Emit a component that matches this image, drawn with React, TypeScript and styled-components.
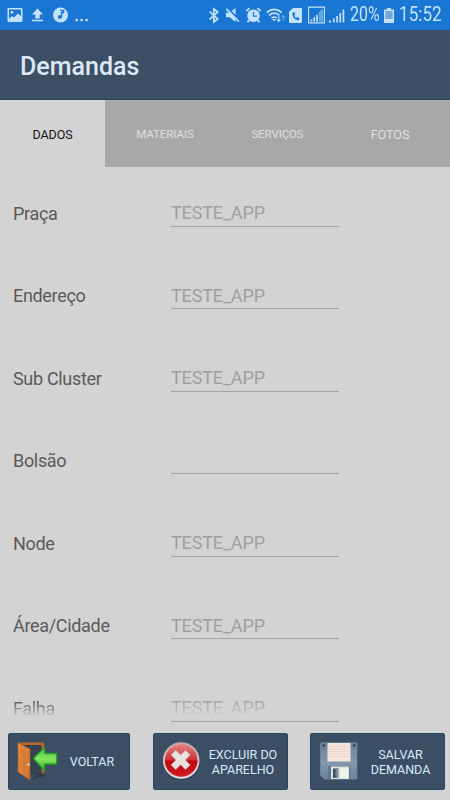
import React from "react";
import styled, { createGlobalStyle, css } from "styled-components";

const GlobalStyle = createGlobalStyle`
  * { box-sizing: border-box; }
  body { margin: 0; background: #d3d3d3; font-family: Roboto, "Liberation Sans", sans-serif; }
`;

const Screen = styled.div`
  width: 450px;
  height: 800px;
  display: flex;
  flex-direction: column;
  overflow: hidden;
  background: #d3d3d3;
`;

const StatusBar = styled.div`
  height: 30px;
  flex: none;
  display: flex;
  align-items: center;
  background: #1976d3;
  color: #c3e2fb;
`;

const Icon = styled.svg<{ $gap: number }>`
  flex: none;
  display: block;
  margin-left: ${(p) => p.$gap}px;
  overflow: visible;
`;

const StatusText = styled.span<{ $gap: number; $width: number; $squeeze: number }>`
  flex: none;
  width: ${(p) => p.$width}px;
  margin-left: ${(p) => p.$gap}px;
  transform: scaleX(${(p) => p.$squeeze});
  transform-origin: left center;
  font-size: 19.5px;
  line-height: 30px;
  white-space: nowrap;
`;

const Header = styled.header`
  height: 70px;
  flex: none;
  display: flex;
  align-items: center;
  padding: 4px 0 0 20px;
  background: #3c4f65;
  border-bottom: 1px solid #24415b;
`;

const Title = styled.h1`
  margin: 0;
  font-size: 25px;
  font-weight: 500;
  letter-spacing: 0;
  color: #dde7f6;
`;

const Tabs = styled.nav`
  height: 67px;
  flex: none;
  display: grid;
  grid-template-columns: 105px 120px 105px 120px;
  background: #a8a8a8;
`;

const Tab = styled.div<{ $active?: boolean; $size: number }>`
  display: flex;
  align-items: center;
  justify-content: center;
  padding-top: 1px;
  font-size: ${(p) => p.$size}px;
  letter-spacing: -0.1px;
  color: ${(p) => (p.$active ? "#151515" : "#dedfe1")};
  background: ${(p) => (p.$active ? "#d3d3d3" : "transparent")};
`;

const Form = styled.main`
  flex: 1;
  min-height: 0;
  overflow: hidden;
  padding-top: 5px;
`;

const Row = styled.div`
  height: 82.5px;
  display: grid;
  grid-template-columns: 157px 169px;
  align-items: center;
  padding-left: 13px;
`;

const fade = css`
  mask-image: linear-gradient(to bottom, #000 20%, transparent 84%);
`;

const Label = styled.label<{ $faded: boolean }>`
  font-size: 18px;
  line-height: 24px;
  letter-spacing: -0.32px;
  padding-top: 1px;
  color: #5a5a5a;
  ${(p) => p.$faded && fade}
`;

const Field = styled.div`
  height: 27px;
  border-bottom: 1px solid #a4a4a4;
  margin-left: 1px;
`;

const Value = styled.div<{ $faded: boolean }>`
  font-size: 18px;
  line-height: 24px;
  letter-spacing: -0.15px;
  padding-top: 1.5px;
  color: #a0a0a0;
  ${(p) => p.$faded && fade}
`;

const Footer = styled.footer`
  height: 78px;
  flex: none;
  display: grid;
  grid-template-columns: 122px 135px 135px;
  gap: 22.5px;
  padding: 11px 0 10px 8px;
`;

const Action = styled.button`
  height: 57px;
  display: flex;
  align-items: center;
  padding: 0;
  border: 1px solid #2a4762;
  border-radius: 2px;
  background: #3c4e64;
  color: #d8e9fa;
  font-family: inherit;
`;

const ActionText = styled.span`
  flex: 1;
  padding-right: 4px;
  font-size: 12.5px;
  line-height: 15px;
  text-align: center;
  white-space: pre;
`;

const tabs = [
  { name: "DADOS", size: 12.5 },
  { name: "MATERIAIS", size: 11.6 },
  { name: "SERVIÇOS", size: 11.5 },
  { name: "FOTOS", size: 12.7 },
];

const rows = [
  ["Praça", "TESTE_APP"],
  ["Endereço", "TESTE_APP"],
  ["Sub Cluster", "TESTE_APP"],
  ["Bolsão", ""],
  ["Node", "TESTE_APP"],
  ["Área/Cidade", "TESTE_APP"],
  ["Falha", "TESTE_APP"],
];

const StatusIcons = () => (
  <StatusBar>
    <Icon $gap={7} width="16" height="14" viewBox="0 0 16 14" fill="currentColor">
      <path fillRule="evenodd" d="M1.5 0h13q1 0 1 1v12q0 1-1 1h-13q-1 0-1-1V1q0-1 1-1ZM2 1.5V11l3-3 2 1.5 4-4 3 2.5V1.5Z" />
      <circle cx="5" cy="4.3" r="1.4" />
    </Icon>
    <Icon $gap={9} width="11" height="15" viewBox="0 0 11 15" fill="currentColor">
      <path d="M5.5.5 11 6.5H7.7v4H3.3v-4H0ZM0 11.8h11v1.4H0Z" />
    </Icon>
    <Icon $gap={10} width="15" height="15" viewBox="0 0 15 15">
      <circle cx="7.5" cy="7" r="7.5" fill="currentColor" />
      <path d="M7.3 2.5h3.2v2H8.6V9" fill="none" stroke="#1976d3" strokeWidth="1.4" />
      <circle cx="6.8" cy="9.1" r="2" fill="#1976d3" />
    </Icon>
    <Icon $gap={7} width="14" height="14" viewBox="0 0 14 14" fill="currentColor">
      <path d="M.5 11h2.3v2.3H.5ZM5.5 11h2.3v2.3H5.5ZM10.5 11h2.3v2.3h-2.3Z" />
    </Icon>
    <Icon $gap={119.5} width="10" height="15" viewBox="0 0 10 15" fill="none" stroke="currentColor" strokeWidth="1.7">
      <path d="m.7 3.7 8 7.2L4.9 14V1l3.8 3.1-8 7.2" />
    </Icon>
    <Icon $gap={7} width="14" height="14" viewBox="0 0 14 14">
      <path d="M0 4.7h3.7L9.5 0v14l-5.8-4.7H0Z" fill="currentColor" />
      <path d="m1 .2 12.5 12.5" stroke="#1976d3" strokeWidth="2.4" />
      <path d="m.3.9 12.7 12.8" stroke="currentColor" strokeWidth="1.6" />
    </Icon>
    <Icon $gap={6} width="15" height="15" viewBox="0 0 15 15">
      <path d="M3.5.2.4 3M11.5.2 14.6 3M3 12.3l-1.5 2M12 12.3l1.5 2" stroke="currentColor" strokeWidth="1.8" />
      <circle cx="7.5" cy="7.7" r="6.3" fill="currentColor" />
      <path d="M7.5 3.8v4.3h3.3" fill="none" stroke="#1976d3" strokeWidth="1.2" />
    </Icon>
    <Icon $gap={5} width="20" height="15" viewBox="0 0 20 15" fill="none" stroke="currentColor">
      <path d="M.7 4.5Q8.2-1.8 15.7 4.5M3.1 7.3q5.1-4.2 10.2 0M5.5 10q2.7-2 5.3 0" strokeWidth="1.7" />
      <path d="m6.2 11 2 2.4 2-2.4Z" fill="currentColor" stroke="none" />
      <path d="M12.8 8.3v5m-1.6-1.6 1.6 1.8 1.6-1.8" strokeWidth="1.1" />
      <path d="M17.3 12.8v-5m-1.6 1.6 1.6-1.8 1.6 1.8" strokeWidth="1.1" opacity=".45" />
    </Icon>
    <Icon $gap={3} width="13" height="15" viewBox="0 0 13 15">
      <path d="M4 0h8q1 0 1 1v13q0 1-1 1H1q-1 0-1-1V4Z" fill="currentColor" />
      <path d="M3.4 5q-.3 6.2 6.1 7.4l1-1.9-2.1-1.4-1.2.8Q5.5 9 5.3 7.3l1-.9-1-2.4Z" fill="#1976d3" />
    </Icon>
    <Icon $gap={6.5} width="17" height="17" viewBox="0 0 17 17" fill="currentColor">
      <path d="M.6.1h15.8v15.8H.6Z" fill="none" stroke="currentColor" strokeWidth="1.1" />
      <path d="M2.5 12.5h1.8v2H2.5ZM5.3 10.3h1.8v4.2H5.3ZM8.1 7.8h1.8v6.7H8.1Z" />
      <path d="M10.8 5h1.8v9.500h-1.8ZM12.600 2.500h2.600v12h-2.600Z" opacity=".45" />
    </Icon>
    <Icon $gap={4} width="16" height="17" viewBox="0 0 16 17" fill="currentColor">
      <path d="M0 13.500h2.200v2H0ZM4 11.500h1.700v4H4ZM7.200 9h1.700v6.500H7.200ZM10.400 6h1.700v9.500h-1.700ZM13.600 2.500h1.700v13h-1.700Z" />
    </Icon>
    <StatusText $gap={5} $width={31} $squeeze={0.82}>20%</StatusText>
    <Icon $gap={3} width="10" height="15" viewBox="0 0 10 15">
      <path d="M3 0h4v1.4h3V15H0V1.4h3Z" fill="currentColor" />
      <path d="M1.4 3h7.2v8H1.4Z" fill="#75a6d8" />
    </Icon>
    <StatusText $gap={4.5} $width={45} $squeeze={0.88}>15:52</StatusText>
  </StatusBar>
);

const DoorIcon = () => (
  <Icon $gap={7} width="43" height="43" viewBox="0 0 43 43">
    <defs>
      <linearGradient id="wood" x2="1" y2="1">
        <stop stopColor="#ec9447" />
        <stop offset="1" stopColor="#c8702c" />
      </linearGradient>
      <linearGradient id="arrow" y2="1" x2="0">
        <stop stopColor="#4fbd3c" />
        <stop offset=".5" stopColor="#82e85f" />
        <stop offset="1" stopColor="#3aa72f" />
      </linearGradient>
    </defs>
    <path d="M2 2.5h26V34H15L2 30Z" fill="#b9682b" />
    <path d="M5 5h20.5v30H14Z" fill="#34414f" />
    <path d="m14 40 12-3 4-2-5-3Z" fill="#293642" opacity=".65" />
    <path d="m2 3 12 6v31L2 32Z" fill="url(#wood)" stroke="#b35e25" strokeWidth=".7" />
    <path d="m4.5 7 3 2v8l-3-2ZM8.8 9.5l3 1.8v8l-3-2ZM4.5 19l3 2v10l-3-2ZM8.8 21.5l3 1.8v10l-3-2Z" fill="#df8237" stroke="#c47031" strokeWidth=".5" />
    <circle cx="12.5" cy="24.5" r="1.2" fill="#d9d7cc" />
    <path d="m17.5 18.5 11-11v6h12V24h-12v6.5Z" fill="url(#arrow)" stroke="#27a325" strokeWidth="1.3" strokeLinejoin="round" />
  </Icon>
);

const DeleteIcon = () => (
  <Icon $gap={8} width="42" height="42" viewBox="0 0 42 42">
    <defs>
      <linearGradient id="red" x2="0" y2="1">
        <stop stopColor="#e58a87" />
        <stop offset=".48" stopColor="#cc3035" />
        <stop offset=".52" stopColor="#bd090e" />
        <stop offset="1" stopColor="#d41b20" />
      </linearGradient>
      <linearGradient id="ring" x2="0" y2="1">
        <stop stopColor="#c9a4a7" />
        <stop offset="1" stopColor="#e1dddd" />
      </linearGradient>
    </defs>
    <circle cx="19.5" cy="20.5" r="18.8" fill="#28394a" opacity=".6" />
    <circle cx="19.2" cy="19.5" r="17.3" fill="url(#red)" stroke="url(#ring)" strokeWidth="2" />
    <path transform="translate(-1.5 -1.2)" d="m10.6 15.1 4.6-4.7 5 4.9 4.8-4.9 4.7 4.7-4.9 5.1 4.9 4.9-4.7 4.7-4.8-4.9-5 4.9-4.6-4.7 4.9-4.9Z" fill="#e7e3e3" stroke="#cfa5a7" strokeWidth=".8" />
  </Icon>
);

const FloppyIcon = () => (
  <Icon $gap={8} width="42" height="42" viewBox="0 0 42 42">
    <defs>
      <linearGradient id="metal" x2="0" y2="1">
        <stop stopColor="#668096" />
        <stop offset=".55" stopColor="#8398ad" />
        <stop offset="1" stopColor="#6a8299" />
      </linearGradient>
    </defs>
    <path d="M2.5 3h35q1 0 1 1v34q0 1-1 1H6l-4-4V4q0-1 .5-1Z" fill="#2f4359" />
    <path transform="translate(0 -.8)" d="M2.5 2.5H37q1 0 1 1V38q0 1-1 1H5.5l-4-4V3.5q0-1 1-1Z" fill="url(#metal)" stroke="#6c879d" strokeWidth=".8" />
    <path d="M8.500 2h23v18.500h-23Z" fill="#f4e5dd" />
    <path d="M8.5 5.5h23M8.5 8h23M8.5 10.5h23M8.5 13h23M8.5 15.5h23" stroke="#e8cdc3" strokeWidth=".7" />
    <path d="M3.5 3.5H6v2H3.5ZM34 3.5h2.5v2H34Z" fill="#293b4b" />
    <path d="M9 25h22v13H9Z" fill="#60788f" />
    <path d="M12 25.5h18V38H12Z" fill="#dde3e0" />
    <path d="M14 27.5h5V37h-5Z" fill="#3b5265" />
    <path d="M16.5 27.5h3V37h-3Z" fill="#798894" />
    <path d="M21.500 27H29v10h-7.500Z" fill="#f0f2ed" />
  </Icon>
);

export default function App() {
  return (
    <Screen>
      <GlobalStyle />
      <StatusIcons />
      <Header><Title>Demandas</Title></Header>
      <Tabs>
        {tabs.map((t, i) => (
          <Tab key={t.name} $active={i === 0} $size={t.size}>{t.name}</Tab>
        ))}
      </Tabs>
      <Form>
        {rows.map(([label, value], i) => (
          <Row key={label}>
            <Label $faded={i === rows.length - 1}>{label}</Label>
            <Field><Value $faded={i === rows.length - 1}>{value}</Value></Field>
          </Row>
        ))}
      </Form>
      <Footer>
        <Action><DoorIcon /><ActionText>VOLTAR</ActionText></Action>
        <Action><DeleteIcon /><ActionText>{"EXCLUIR DO\nAPARELHO"}</ActionText></Action>
        <Action><FloppyIcon /><ActionText>{"SALVAR\nDEMANDA"}</ActionText></Action>
      </Footer>
    </Screen>
  );
}
